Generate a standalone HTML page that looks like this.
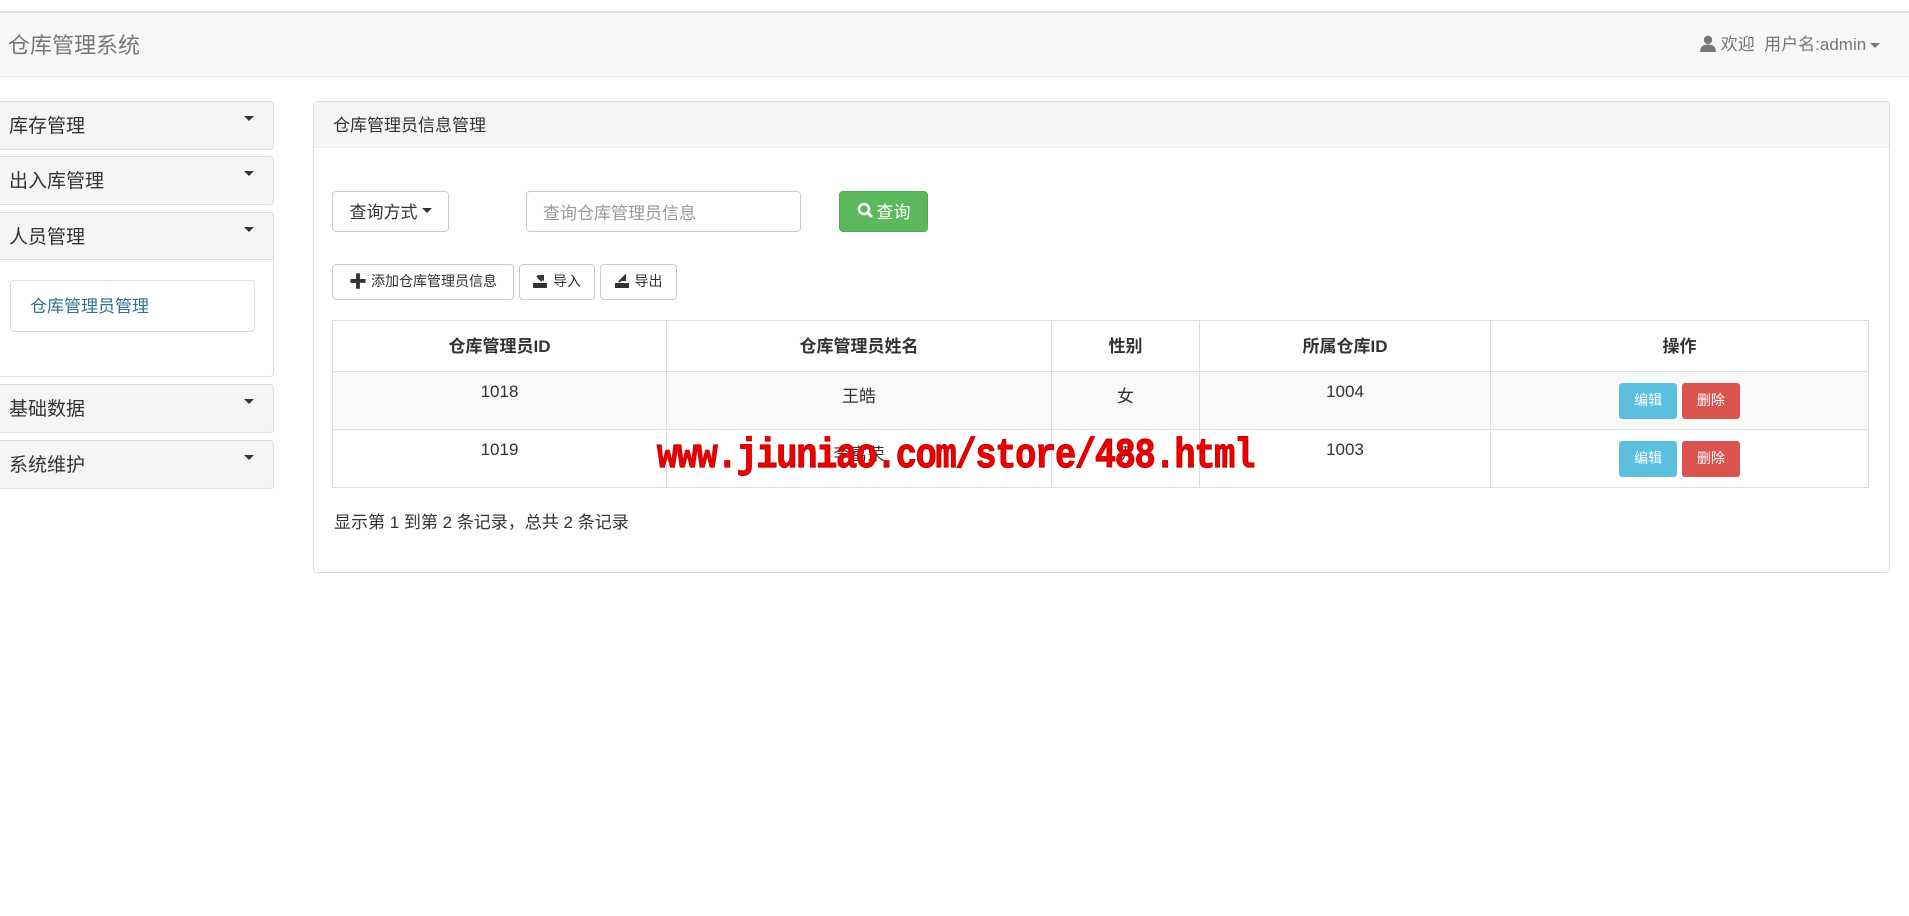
<!DOCTYPE html>
<html><head><meta charset="utf-8"><style>
*{box-sizing:border-box;margin:0;padding:0}
body{width:1909px;height:916px;background:#fff;font-family:"Liberation Sans","Noto Sans CJK SC",sans-serif;color:#333;font-size:17px;position:relative;overflow:hidden}
.abs{position:absolute}
.nav{left:0;top:11px;width:1909px;height:66px;background:#f8f8f8;border-top:2px solid #e0e0e0;border-bottom:1px solid #e7e7e7}
.brand{left:8px;top:28px;font-size:22px;color:#777}
.user{left:1700px;top:30px;font-size:17px;color:#777}
.caret{display:inline-block;width:0;height:0;border-left:5px solid transparent;border-right:5px solid transparent;border-top:5px solid #777;vertical-align:middle;margin-left:4px}
.sp{left:0;width:274px;background:#f5f5f5;border:1px solid #ddd;border-left:none;border-radius:0 4px 4px 0;font-size:19px;color:#333;padding:9px 9px}
.sp .caret{position:absolute;right:19px;top:14px;border-top-color:#333}
.main{left:313px;top:101px;width:1577px;height:472px;border:1px solid #ddd;border-radius:4px}
.mh{left:0;top:0;width:100%;height:46px;background:#f5f5f5;border-bottom:1px solid #eee;padding:9px 19px;font-size:17px}
.btn{border:1px solid #ccc;border-radius:4px;background:#fff;font-size:17px;color:#333;display:flex;align-items:center;justify-content:center;padding-bottom:3px}
.sm{font-size:14px}
table{border-collapse:collapse;position:absolute;left:332px;top:320px;width:1537px;font-size:17px}
td,th{border:1px solid #ddd;text-align:center}
th{height:51px;font-weight:bold;padding-bottom:3px}
td{height:58px;vertical-align:top;padding-top:10px}
tr.o td{background:#f9f9f9}
.eb{display:inline-block;width:58px;height:36px;line-height:34px;color:#fff;font-size:14px;border-radius:3px;margin-top:1px}
</style></head><body>
<div class="abs nav"></div>
<div class="abs brand">仓库管理系统</div>
<div class="abs user"><svg width="16" height="17" viewBox="0 0 16 17" style="vertical-align:-2px"><circle cx="8" cy="5" r="4.2" fill="#777"/><path d="M0 17 Q0 9.5 8 9.5 Q16 9.5 16 17Z" fill="#777"/></svg> 欢迎&nbsp; 用户名:admin<span class="caret"></span></div>

<div class="abs sp" style="top:101px;height:49px">库存管理<span class="caret"></span></div>
<div class="abs sp" style="top:156px;height:49px">出入库管理<span class="caret"></span></div>
<div class="abs" style="left:0;top:212px;width:274px;height:165px;border:1px solid #ddd;border-left:none;border-radius:0 4px 4px 0"></div>
<div class="abs sp" style="top:212px;height:48px;border-radius:0 4px 0 0">人员管理<span class="caret"></span></div>
<div class="abs" style="left:10px;top:280px;width:245px;height:52px;border:1px solid #ddd;border-radius:4px;padding:11px 19px;font-size:17px;color:#31708f">仓库管理员管理</div>
<div class="abs sp" style="top:384px;height:49px">基础数据<span class="caret"></span></div>
<div class="abs sp" style="top:440px;height:49px">系统维护<span class="caret"></span></div>

<div class="abs main"><div class="abs mh">仓库管理员信息管理</div></div>
<div class="abs btn" style="left:332px;top:191px;width:117px;height:41px">查询方式<span class="caret" style="border-top-color:#333"></span></div>
<div class="abs" style="left:526px;top:191px;width:275px;height:41px;border:1px solid #ccc;border-radius:4px;padding:7px 16px;color:#999;font-size:17px">查询仓库管理员信息</div>
<div class="abs btn" style="left:839px;top:191px;width:89px;height:41px;background:#5cb85c;border-color:#4cae4c;color:#fff"><svg width="17" height="17" viewBox="0 0 17 17" style="margin-right:3px"><circle cx="7" cy="7" r="5" fill="none" stroke="#fff" stroke-width="2.5"/><path d="M10.5 10.5L15 15" stroke="#fff" stroke-width="3"/></svg>查询</div>
<div class="abs btn sm" style="left:332px;top:264px;width:182px;height:36px"><b style="font-size:18px;margin-right:4px">✚</b>添加仓库管理员信息</div>
<div class="abs btn sm" style="left:519px;top:264px;width:76px;height:36px"><svg width="14" height="14" viewBox="0 0 14 14" style="margin-right:6px"><path d="M1 10h12v4H1zM4 2l5 5M7 2l3 3V2z" stroke="#333" stroke-width="2" fill="#333"/></svg>导入</div>
<div class="abs btn sm" style="left:600px;top:264px;width:77px;height:36px"><svg width="14" height="14" viewBox="0 0 14 14" style="margin-right:6px"><path d="M1 10h12v4H1zM4 8l5-5M10 2v4H6z" stroke="#333" stroke-width="2" fill="#333"/></svg>导出</div>

<table>
<tr><th style="width:334px">仓库管理员ID</th><th style="width:385px">仓库管理员姓名</th><th style="width:148px">性别</th><th style="width:291px">所属仓库ID</th><th>操作</th></tr>
<tr class="o"><td>1018</td><td>王皓</td><td>女</td><td>1004</td><td><span class="eb" style="background:#5bc0de">编辑</span> <span class="eb" style="background:#d9534f">删除</span></td></tr>
<tr><td>1019</td><td>李富荣</td><td>男</td><td>1003</td><td><span class="eb" style="background:#5bc0de">编辑</span> <span class="eb" style="background:#d9534f">删除</span></td></tr>
</table>
<div class="abs" style="left:332px;top:487px;width:1537px;height:3px;border-top:1px solid #ddd"></div>
<div class="abs" style="left:334px;top:508px;font-size:17px">显示第 1 到第 2 条记录，总共 2 条记录</div>
<div class="abs" style="left:657px;top:436px;font-family:'Liberation Mono',monospace;font-weight:bold;font-size:35px;color:#e00;letter-spacing:-1.1px;-webkit-text-stroke:1px #c00;transform:scaleY(1.2)">www.jiuniao.com/store/488.html</div>
</body></html>
